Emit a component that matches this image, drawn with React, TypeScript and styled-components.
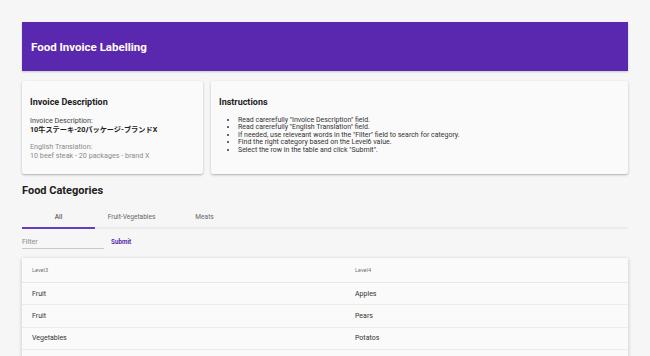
import React, { useState } from "react";
import styled, { createGlobalStyle } from "styled-components";

const GlobalStyle = createGlobalStyle`
  body {
    margin: 0;
    background: #f6f6f6;
    font-family: Roboto, "Noto Sans CJK JP", "Liberation Sans", sans-serif;
    color: #212121;
  }
  * {
    box-sizing: border-box;
  }
`;

const instructions = [
  'Read carerefully "Invoice Description" field.',
  'Read carerefully "English Translation" field.',
  'If needed, use releveant words in the "Filter" field to search for category.',
  "Find the right category based on the Level6 value.",
  'Select the row in the table and click "Submit".',
];

const tabs = ["All", "Fruit-Vegetables", "Meats"];

const rows = [
  { level3: "Fruit", level4: "Apples" },
  { level3: "Fruit", level4: "Pears" },
  { level3: "Vegetables", level4: "Potatos" },
  { level3: "", level4: "" },
];

const App = () => {
  const [active, setActive] = useState(0);

  return (
    <Page>
      <GlobalStyle />
      <Header>
        <HeaderTitle>Food Invoice Labelling</HeaderTitle>
      </Header>
      <Cards>
        <Card>
          <CardTitle>Invoice Description</CardTitle>
          <Field>
            <FieldLabel>Invoice Description:</FieldLabel>
            <FieldValue bold>10牛ステーキ-20パッケージ-ブランドX</FieldValue>
          </Field>
          <Field>
            <FieldLabel muted>English Translation:</FieldLabel>
            <FieldValue>10 beef steak - 20 packages - brand X</FieldValue>
          </Field>
        </Card>
        <Card>
          <CardTitle>Instructions</CardTitle>
          <List>
            {instructions.map((line) => (
              <li key={line}>{line}</li>
            ))}
          </List>
        </Card>
      </Cards>
      <SectionTitle>Food Categories</SectionTitle>
      <TabBar>
        {tabs.map((t, i) => (
          <Tab key={t} active={i === active} onClick={() => setActive(i)}>
            {t}
          </Tab>
        ))}
      </TabBar>
      <FilterRow>
        <FilterInput placeholder="Filter" />
        <SubmitButton>Submit</SubmitButton>
      </FilterRow>
      <Table>
        <HeadRow>
          <HeadCell>Level3</HeadCell>
          <HeadCell>Level4</HeadCell>
        </HeadRow>
        {rows.map((r, i) => (
          <Row key={i}>
            <Cell>{r.level3}</Cell>
            <Cell>{r.level4}</Cell>
          </Row>
        ))}
      </Table>
    </Page>
  );
};

const Page = styled.div`
  padding: 22px;
  height: 356px;
  overflow: hidden;
`;

const Header = styled.header`
  height: 49px;
  background: #5a28ae;
  display: flex;
  align-items: center;
  padding-left: 9px;
  box-shadow: 0 1px 2px rgba(0, 0, 0, 0.2);
`;

const HeaderTitle = styled.h1`
  margin: 0;
  color: #fff;
  font-size: 11.5px;
  font-weight: 700;
`;

const Cards = styled.div`
  display: grid;
  grid-template-columns: 181px 1fr;
  gap: 8px;
  margin-top: 10px;
`;

const Card = styled.section`
  background: #fafafa;
  height: 93px;
  padding: 16px 8px 0;
  box-shadow: 0 1px 3px rgba(0, 0, 0, 0.2), 0 1px 1px rgba(0, 0, 0, 0.1);
  border-radius: 2px;
`;

const CardTitle = styled.h2`
  margin: 0 0 9px;
  font-size: 9px;
  line-height: 11px;
  font-weight: 700;
  color: #212121;
`;

const Field = styled.div`
  margin-bottom: 9px;
  font-size: 7.2px;
  line-height: 8.5px;
`;

const FieldLabel = styled.div<{ muted?: boolean }>`
  color: ${(p) => (p.muted ? "#8a8a8a" : "#444")};
`;

const FieldValue = styled.div<{ bold?: boolean }>`
  color: ${(p) => (p.bold ? "#212121" : "#8a8a8a")};
  font-weight: ${(p) => (p.bold ? 700 : 400)};
`;

const List = styled.ul`
  margin: 0;
  padding-left: 19px;
  font-size: 7px;
  line-height: 7.4px;
  color: #333;
`;

const SectionTitle = styled.h2`
  margin: 10px 0 0;
  font-size: 11px;
  font-weight: 700;
  color: #212121;
  line-height: 14px;
`;

const TabBar = styled.div`
  display: flex;
  margin-top: 9px;
  border-bottom: 2px solid #ebebeb;
`;

const Tab = styled.button<{ active?: boolean }>`
  width: 73px;
  height: 22px;
  border: none;
  background: none;
  padding: 0;
  margin-bottom: -2px;
  font-family: inherit;
  font-size: 6.6px;
  color: ${(p) => (p.active ? "#333" : "#666")};
  border-bottom: 2px solid ${(p) => (p.active ? "#6a3bc0" : "transparent")};
`;

const FilterRow = styled.div`
  display: flex;
  align-items: center;
  gap: 7px;
  margin-top: 6px;
`;

const FilterInput = styled.input`
  width: 82px;
  height: 14px;
  padding: 0;
  border: none;
  border-bottom: 1px solid #c8c8c8;
  background: transparent;
  font-family: inherit;
  font-size: 7px;
  outline: none;
  &::placeholder {
    color: #8a8a8a;
  }
`;

const SubmitButton = styled.button`
  border: none;
  background: none;
  padding: 0;
  font-family: inherit;
  font-size: 6.3px;
  font-weight: 700;
  color: #5a28ae;
`;

const Table = styled.div`
  margin-top: 9px;
  background: #fafafa;
  box-shadow: 0 1px 4px rgba(0, 0, 0, 0.22);
`;

const HeadRow = styled.div`
  display: grid;
  grid-template-columns: 323px 1fr;
  height: 25px;
  align-items: center;
  border-bottom: 1px solid #e8e8e8;
`;

const HeadCell = styled.div`
  padding-left: 10px;
  font-size: 5.6px;
  color: #777;
`;

const Row = styled.div`
  display: grid;
  grid-template-columns: 323px 1fr;
  height: 22.4px;
  align-items: center;
  border-bottom: 1px solid #ececec;
`;

const Cell = styled.div`
  padding-left: 10px;
  font-size: 7px;
  color: #333;
`;

export default App;
